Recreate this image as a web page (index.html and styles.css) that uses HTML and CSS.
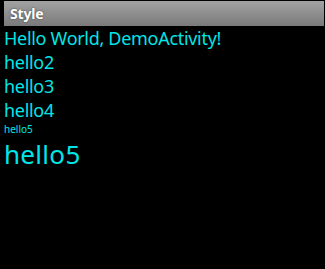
FILE: index.html
```html
<!DOCTYPE html>
<html>
<head>
<meta charset="utf-8">
<link rel="stylesheet" href="styles.css">
</head>
<body>
<div class="titlebar"><span class="title">Style</span></div>
<div class="content">
  <div class="line">Hello World, DemoActivity!</div>
  <div class="line">hello2</div>
  <div class="line">hello3</div>
  <div class="line">hello4</div>
  <div class="line small">hello5</div>
  <div class="line big">hello5</div>
</div>
</body>
</html>
```
FILE: styles.css
```css
html, body {
  margin: 0;
  padding: 0;
  background: #000;
  width: 325px;
  height: 269px;
  overflow: hidden;
}
body {
  font-family: "Noto Sans", "Open Sans", sans-serif;
}
.titlebar {
  margin: 1px 1px 0 4px;
  height: 25px;
  background: linear-gradient(#a2a2a2, #7a7a7a);
  display: flex;
  align-items: center;
  padding-left: 6px;
}
.title {
  color: #fff;
  font-weight: bold;
  font-size: 14px;
  letter-spacing: -0.2px;
  text-shadow: 0 0 2px rgba(0,0,0,0.6);
}
.content {
  padding-left: 4px;
  color: #00e6e8;
}
.line {
  font-size: 18px;
  line-height: 24px;
  letter-spacing: -0.3px;
}
.small {
  font-size: 10px;
  line-height: 14px;
  letter-spacing: 0;
}
.big {
  font-size: 26px;
  line-height: 36px;
  letter-spacing: 0.3px;
}
```
